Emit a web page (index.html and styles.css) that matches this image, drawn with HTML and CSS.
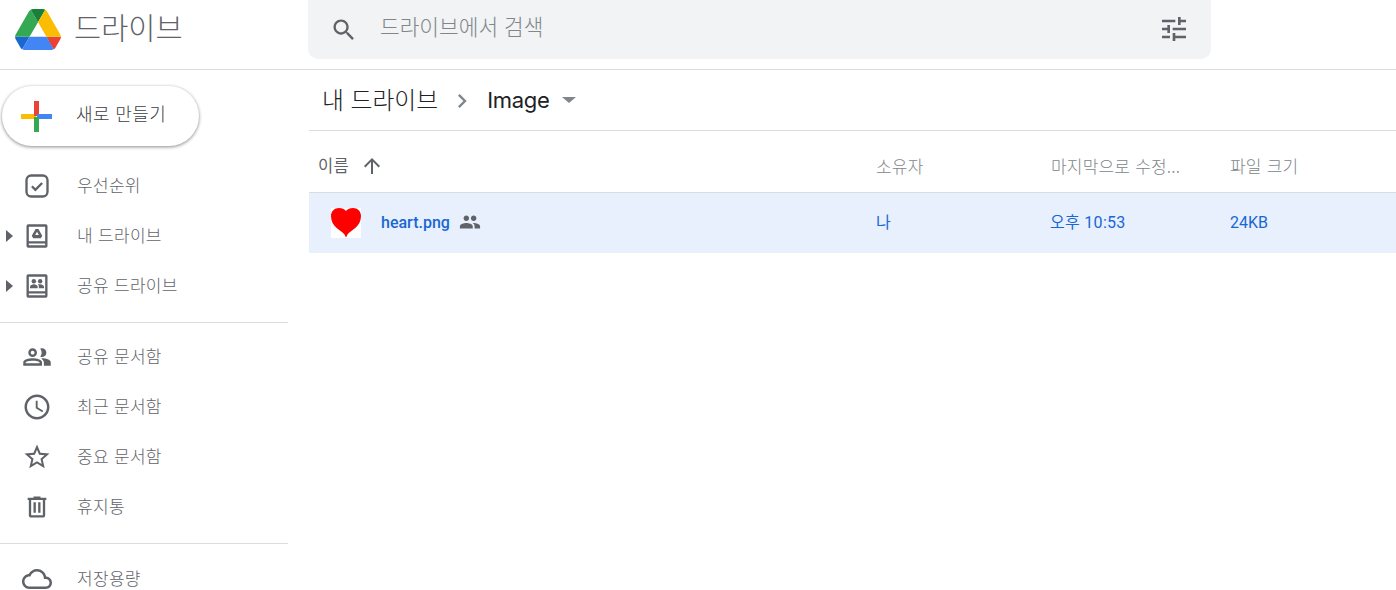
FILE: index.html
```html
<!DOCTYPE html>
<html lang="ko">
<head>
<meta charset="utf-8">
<title>드라이브</title>
<link rel="stylesheet" href="styles.css">
</head>
<body>
<header class="topbar">
  <div class="brand">
    <svg class="logo" viewBox="0 0 87.3 78"><path d="m6.6 66.85 3.85 6.65c.8 1.4 1.95 2.5 3.3 3.3l13.75-23.8h-27.5c0 1.55.4 3.1 1.2 4.5z" fill="#1967d2"/><path d="m43.65 25-13.75-23.8c-1.35.8-2.5 1.9-3.3 3.3l-25.4 44a9.06 9.06 0 0 0 -1.2 4.5h27.5z" fill="#34a853"/><path d="m73.55 76.8c1.35-.8 2.5-1.9 3.3-3.3l1.6-2.75 7.65-13.25c.8-1.4 1.2-2.95 1.2-4.5h-27.502l5.852 11.5z" fill="#ea4335"/><path d="m43.65 25 13.75-23.8c-1.35-.8-2.9-1.2-4.5-1.2h-18.5c-1.6 0-3.15.45-4.5 1.2z" fill="#188038"/><path d="m59.8 53h-32.3l-13.75 23.8c1.35.8 2.9 1.2 4.5 1.2h50.8c1.6 0 3.15-.45 4.5-1.2z" fill="#4285f4"/><path d="m73.4 26.5-12.7-22c-.8-1.4-1.95-2.5-3.3-3.3l-13.75 23.8 16.15 28h27.45c0-1.55-.4-3.1-1.2-4.5z" fill="#fbbc04"/></svg>
    <span class="brand-name">드라이브</span>
  </div>
  <div class="search">
    <svg class="search-icon" viewBox="0 0 24 24"><path d="M15.5 14h-.79l-.28-.27C15.41 12.59 16 11.11 16 9.5 16 5.91 13.09 3 9.5 3S3 5.91 3 9.5 5.91 16 9.5 16c1.61 0 3.09-.59 4.23-1.57l.27.28v.79l5 4.99L20.49 19l-4.99-5zm-6 0C7.01 14 5 11.99 5 9.5S7.01 5 9.5 5 14 7.01 14 9.5 11.99 14 9.5 14z"/></svg>
    <span class="search-text">드라이브에서 검색</span>
    <svg class="tune-icon" viewBox="0 0 24 24"><path d="M3 17v2h6v-2H3zM3 5v2h10V5H3zm10 16v-2h8v-2h-8v-2h-2v6h2zM7 9v2H3v2h4v2h2V9H7zm14 4v-2H11v2h10zm-6-4h2V7h4V5h-4V3h-2v6z"/></svg>
  </div>
</header>
<div class="body">
  <aside class="sidebar">
    <div class="new-wrap">
      <button class="new-btn">
        <svg class="plus" viewBox="0 0 31 31"><rect x="0" y="13" width="15" height="5" fill="#fbbc04"/><rect x="13" y="0" width="5" height="15" fill="#ea4335"/><rect x="16" y="13" width="15" height="5" fill="#4285f4"/><rect x="13" y="16" width="5" height="15" fill="#34a853"/></svg>
        <span>새로 만들기</span>
      </button>
    </div>
    <nav class="nav nav-first">
      <a class="item"><span class="caret-slot"></span>
        <svg class="ico" viewBox="0 0 24 24"><rect x="3" y="3" width="18" height="18" rx="4" fill="none" stroke="#5f6368" stroke-width="2"/><path d="M7.6 12.2l3 3 5.8-5.8" fill="none" stroke="#5f6368" stroke-width="2"/></svg>
        <span>우선순위</span></a>
      <a class="item"><span class="caret-slot"><i class="caret"></i></span>
        <svg class="ico" viewBox="0 0 24 24"><path fill-rule="evenodd" d="M4.5 2h15A1.5 1.5 0 0 1 21 3.500v17a1.500 1.500 0 0 1-1.500 1.500h-15A1.500 1.500 0 0 1 3 20.500v-17A1.500 1.500 0 0 1 4.500 2zM5 4v12.500h14V4zM5 18.500V20h14v-1.500z"/><path d="M10.800 6h2.400l3.300 5.700-1.200 2.300H8.700l-1.200-2.300zM12 8.300l-1.600 2.900h3.200z"/></svg>
        <span>내 드라이브</span></a>
      <a class="item"><span class="caret-slot"><i class="caret"></i></span>
        <svg class="ico" viewBox="0 0 24 24"><path fill-rule="evenodd" d="M4.500 2h15A1.500 1.500 0 0 1 21 3.500v17a1.500 1.500 0 0 1-1.500 1.500h-15A1.500 1.500 0 0 1 3 20.500v-17A1.500 1.500 0 0 1 4.500 2zM5 4v12.500h14V4zM5 18.500V20h14v-1.500z"/><circle cx="9.300" cy="8" r="1.900"/><circle cx="14.700" cy="8" r="1.900"/><path d="M6 14v-1.400c0-1.300 2-2.100 3.300-2.100s3.300.8 3.300 2.100V14zM13.600 14v-1.400c0-.8-.3-1.400-.8-1.900.6-.2 1.300-.2 1.900-.2 1.300 0 3.300.8 3.300 2.100V14z"/></svg>
        <span>공유 드라이브</span></a>
    </nav>
    <hr class="rule rule-one">
    <nav class="nav">
      <a class="item"><span class="caret-slot"></span>
        <svg class="ico ico-lg" viewBox="0 0 24 24"><path d="M16.500 13c-.3 0-.7 0-1.100.1 1.200.9 2.100 2 2.100 3.400V19H23v-2.750C23 14.080 18.670 13 16.500 13zM16 12c1.930 0 3.500-1.570 3.500-3.500S17.930 5 16 5c-.5 0-1 .1-1.400.3.700 1 1.100 2 1.100 3.200s-.4 2.300-1.100 3.200c.4.200.9.300 1.400.300z"/><path fill-rule="evenodd" d="M8.500 12C6.570 12 5 10.430 5 8.500S6.570 5 8.500 5 12 6.570 12 8.500 10.430 12 8.500 12zm0-2c.83 0 1.500-.67 1.500-1.500S9.330 7 8.500 7 7 7.670 7 8.500 7.670 10 8.500 10zM1 19v-2.750C1 14.080 5.330 13 8.500 13s7.500 1.080 7.500 3.250V19zm2-2h11v-.75c0-.54-2.900-1.250-5.500-1.250S3 15.710 3 16.250z"/></svg>
        <span>공유 문서함</span></a>
      <a class="item"><span class="caret-slot"></span>
        <svg class="ico ico-lg" viewBox="0 0 24 24"><path d="M11.990 2C6.470 2 2 6.480 2 12s4.470 10 9.990 10C17.520 22 22 17.520 22 12S17.520 2 11.990 2zM12 20c-4.420 0-8-3.580-8-8s3.580-8 8-8 8 3.580 8 8-3.580 8-8 8zm.5-13H11v6l5.250 3.150.750-1.230-4.500-2.670z"/></svg>
        <span>최근 문서함</span></a>
      <a class="item"><span class="caret-slot"></span>
        <svg class="ico ico-lg" viewBox="0 0 24 24"><path d="M22 9.240l-7.190-.62L12 2 9.190 8.630 2 9.240l5.460 4.730L5.820 21 12 17.270 18.180 21l-1.630-7.030L22 9.240zM12 15.400l-3.760 2.270 1-4.280-3.320-2.880 4.380-.38L12 6.100l1.710 4.040 4.380.38-3.320 2.880 1 4.280L12 15.400z"/></svg>
        <span>중요 문서함</span></a>
      <a class="item"><span class="caret-slot"></span>
        <svg class="ico" viewBox="0 0 24 24"><path d="M15 4V3H9v1H4v2h1v13c0 1.100.9 2 2 2h10c1.100 0 2-.9 2-2V6h1V4h-5zm2 15H7V6h10v13zM9 8h2v9H9zm4 0h2v9h-2z"/></svg>
        <span>휴지통</span></a>
    </nav>
    <hr class="rule rule-two">
    <nav class="nav">
      <a class="item"><span class="caret-slot"></span>
        <svg class="ico ico-lg" viewBox="0 0 24 24"><path d="M19.350 10.040C18.670 6.590 15.640 4 12 4 9.110 4 6.600 5.640 5.350 8.040 2.340 8.360 0 10.910 0 14c0 3.310 2.690 6 6 6h13c2.760 0 5-2.240 5-5 0-2.640-2.050-4.780-4.650-4.960zM19 18H6c-2.210 0-4-1.790-4-4s1.790-4 4-4h.710C7.370 7.690 9.480 6 12 6c3.040 0 5.500 2.460 5.500 5.500v.5H19c1.660 0 3 1.340 3 3s-1.340 3-3 3z"/></svg>
        <span>저장용량</span></a>
    </nav>
  </aside>
  <main class="main">
    <div class="crumbs">
      <span class="crumb">내 드라이브</span>
      <svg class="chev" viewBox="0 0 24 24"><path d="M8.590 16.590L13.170 12 8.590 7.410 10 6l6 6-6 6z"/></svg>
      <span class="crumb crumb-latin">Image</span>
      <i class="drop"></i>
    </div>
    <div class="row head">
      <div class="col-name head-name"><span>이름</span>
        <svg class="arrow" viewBox="0 0 24 24"><path d="M4 12l1.410 1.410L11 7.830V20h2V7.830l5.580 5.590L20 12l-8-8-8 8z"/></svg>
      </div>
      <div class="col-owner">소유자</div>
      <div class="col-date">마지막으로 수정...</div>
      <div class="col-size">파일 크기</div>
    </div>
    <div class="row file">
      <div class="col-name file-name">
        <svg class="thumb" viewBox="0 0 30 30"><rect width="30" height="30" fill="#fff"/><path d="M15 29.500l-1.500-3C10 22 0 19 0 8 0 3 3.500 0 8 0c3 0 5.500 1 7 3 1.500-2 4-3 7-3 4.500 0 8 3 8 8 0 11-10 14-13.500 18.500z" fill="#f00"/></svg>
        <span class="fname">heart.png</span>
        <svg class="shared" viewBox="0 0 24 24"><path d="M16 11c1.660 0 2.990-1.340 2.990-3S17.660 5 16 5c-1.660 0-3 1.340-3 3s1.340 3 3 3zm-8 0c1.660 0 2.990-1.340 2.990-3S9.660 5 8 5C6.340 5 5 6.340 5 8s1.340 3 3 3zm0 2c-2.330 0-7 1.170-7 3.500V19h14v-2.500c0-2.330-4.670-3.500-7-3.500zm8 0c-.29 0-.62.020-.97.050 1.160.84 1.970 1.970 1.970 3.450V19h6v-2.500c0-2.330-4.670-3.500-7-3.500z"/></svg>
      </div>
      <div class="col-owner">나</div>
      <div class="col-date date-cell">오후 10:53</div>
      <div class="col-size">24KB</div>
    </div>
  </main>
</div>
</body>
</html>
```
FILE: styles.css
```css
* { box-sizing: border-box; }
html, body { margin: 0; height: 590px; overflow: hidden; background: #fff; }
body { font-family: Roboto, "Noto Sans CJK KR", sans-serif; color: #5f6368; font-size: 14px; }

.topbar { height: 70px; display: flex; align-items: flex-start; border-bottom: 1px solid #dadce0; }
.brand { width: 308px; display: flex; align-items: center; height: 58px; padding-left: 15px; }
.logo { width: 46px; height: 41px; }
.brand-name { font-size: 29.5px; line-height: 36px; margin-left: 13px; margin-top: -7px; font-family: "Noto Sans CJK KR", sans-serif; font-weight: 300; }
.search { width: 903px; height: 59px; background: #f1f3f4; border-radius: 0 0 10px 10px; display: flex; align-items: center; padding-left: 22px; padding-right: 21px; }
.search-icon { width: 28px; height: 28px; fill: #5f6368; margin-top: 1px; }
.search-text { font-family: "Noto Sans CJK KR", sans-serif; font-size: 21.4px; color: #80868b; margin-left: 22px; font-weight: 300; flex: 1; margin-top: -9px; }
.tune-icon { width: 32px; height: 32px; fill: #5f6368; margin-top: -2px; }

.body { display: flex; height: 520px; }
.sidebar { width: 288px; flex: none; }
.new-wrap { padding: 16px 0 0 2px; }
.new-btn { width: 197px; height: 60px; border: 0; border-radius: 30px; background: #fff; box-shadow: 0 1px 3px rgba(60,64,67,.35), 0 1px 3px 1px rgba(60,64,67,.2); display: flex; align-items: center; padding: 0 0 0 19px; font-family: "Noto Sans CJK KR", sans-serif; font-size: 18px; letter-spacing: .4px; font-weight: 300; color: #3c4043; }
.new-btn span { margin-left: 24px; margin-top: -7px; }
.plus { width: 31px; height: 31px; }

.nav { display: flex; flex-direction: column; }
.nav-first { margin-top: 14px; }
.item { height: 50px; display: flex; align-items: center; font-family: "Noto Sans CJK KR", sans-serif; font-size: 17px; font-weight: 300; color: #5f6368; }
.item span:last-child { margin-left: 26px; margin-top: -1px; letter-spacing: .3px; }
.caret-slot { width: 23px; display: flex; padding-left: 6px; }
.caret { width: 0; height: 0; border-left: 7px solid #5f6368; border-top: 6px solid transparent; border-bottom: 6px solid transparent; margin-top: 1px; }
.ico { width: 28px; height: 28px; fill: #5f6368; margin-top: 2px; }
.ico-lg { width: 30px; height: 30px; margin-left: -1px; margin-right: -1px; }
.rule { border: 0; border-top: 1px solid #dadce0; margin: 0; }
.rule-one { margin-top: 12px; margin-bottom: 8px; }
.rule-two { margin-top: 12px; margin-bottom: 9px; }

.main { margin-left: 21px; flex: 1; }
.crumbs { height: 61px; display: flex; align-items: center; border-bottom: 1px solid #dadce0; padding-left: 13px; color: #202124; }
.crumb { font-family: "Noto Sans CJK KR", sans-serif; font-size: 23.8px; font-weight: 300; margin-top: -3px; }
.crumb-latin { font-family: Inter, Roboto, sans-serif; font-size: 22px; font-weight: 400; margin-top: 0; letter-spacing: -.3px; }
.chev { width: 28px; height: 28px; fill: #80868b; margin: 1px 11px 0 10px; }
.drop { width: 0; height: 0; border-top: 6px solid #80868b; border-left: 7px solid transparent; border-right: 7px solid transparent; margin-left: 12px; }

.row { display: flex; align-items: center; }
.head { height: 62px; border-bottom: 1px solid #dadce0; font-family: "Noto Sans CJK KR", sans-serif; font-size: 17px; font-weight: 300; letter-spacing: .2px; color: #80868b; padding-top: 11px; }
.head > div { margin-top: -4px; }
.file { height: 60px; background: #e8f0fe; color: #1967d2; font-size: 16px; line-height: 20px; }
.col-name { width: 567px; display: flex; align-items: center; }
.col-owner { width: 175px; }
.col-date { width: 179px; }
.date-cell { width: 180px; margin-left: -1px; letter-spacing: .3px; }
.col-size { flex: 1; }
.head-name { padding-left: 9px; color: #5f6368; font-size: 16.5px; font-weight: 400; }
.arrow { width: 24px; height: 24px; fill: #5f6368; margin-left: 11px; margin-top: 2px; }
.file-name { padding-left: 22px; }
.thumb { width: 30px; height: 30px; }
.fname { margin-left: 20px; font-weight: 500; font-family: Roboto, sans-serif; }
.shared { width: 22px; height: 22px; fill: #5f6368; margin-left: 9px; margin-top: -3px; }
```
